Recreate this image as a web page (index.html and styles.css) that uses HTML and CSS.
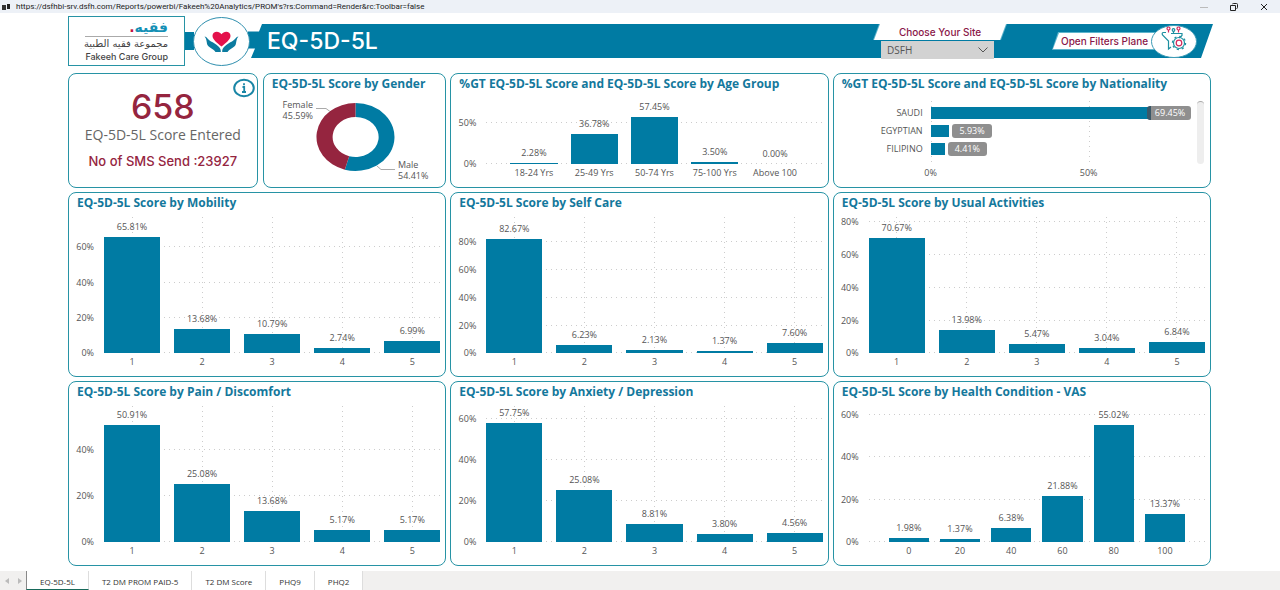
FILE: index.html
```html
<!DOCTYPE html>
<html lang="en">
<head>
<meta charset="utf-8">
<title>EQ-5D-5L</title>
<link rel="stylesheet" href="styles.css">
</head>
<body>
<div class="titlebar">
  <svg class="favicon" viewBox="0 0 9 8" aria-hidden="true"><path d="M0 2h4v5H0z" fill="#333"/><path d="M5 1h3v5H5z" fill="#222"/></svg>
  <span class="url">https://dsfhbi-srv.dsfh.com/Reports/powerbi/Fakeeh%20Analytics/PROM's?rs:Command=Render&amp;rc:Toolbar=false</span>
  <div class="window-buttons">
    <button type="button" aria-label="Minimize"><svg viewBox="0 0 8 8"><path d="M0 4.5h8" stroke="#bbb"/></svg></button>
    <button type="button" aria-label="Restore"><svg viewBox="0 0 8 8"><path d="M.5 2.5h5v5h-5zM2.500 1.200q0-.7.8-.7H6.500q1 0 1 1V4.500q0 1-1 1" fill="none" stroke="#222"/></svg></button>
    <button type="button" aria-label="Close"><svg viewBox="0 0 8 8"><path d="M1 1l6 6M7 1l-6 6" stroke="#222"/></svg></button>
  </div>
</div>

<header class="header">
  <div class="logo">
    <strong class="logo-mark" lang="ar" dir="rtl">فقيه<span>.</span></strong>
    <span class="logo-arabic" lang="ar" dir="rtl">مجموعة فقيه الطبية</span>
    <span class="logo-latin">Fakeeh Care Group</span>
  </div>
  <div class="link-bar"></div>
  <svg class="emblem" viewBox="0 0 57 49" aria-hidden="true">
    <ellipse cx="28.500" cy="24.500" rx="28" ry="24" fill="#fff" stroke="#2f8fae"/>
    <path d="M28.500 29.500C24 26 19.500 22.500 19.500 18.800C19.500 14 26 13.300 28.500 17.300C31 13.300 37.500 14 37.500 18.800C37.500 22.500 33 26 28.500 29.500Z" fill="#e4114b"/>
    <path d="M11.500 19.500C14 19.500 15 23 18 24.500C20 25.500 23 27 26 30C27.500 31.500 27.800 33 27.800 35H22.500C20 31.500 16 30.500 14.500 28C13.500 26 14 22 11.500 19.500Z" fill="#0b7b9f"/>
    <path d="M45.500 19.500C43 19.500 42 23 39 24.500C37 25.500 34 27 31 30C29.500 31.500 29.200 33 29.200 35H34.500C37 31.500 41 30.500 42.500 28C43.500 26 43 22 45.500 19.500Z" fill="#0b7b9f"/>
  </svg>
  <div class="banner">
    <h1>EQ-5D-5L</h1>
    <div class="site">
      <label class="site-label" for="site"><span>Choose Your Site</span></label>
      <div class="site-box">
        <select id="site"><option>DSFH</option></select>
        <svg viewBox="0 0 10 6" aria-hidden="true"><path d="M.5 .5L5 5L9.500 .5" fill="none" stroke="#555"/></svg>
      </div>
    </div>
    <button type="button" class="filters">
      <span class="filters-label"><span>Open Filters Plane</span></span>
      <svg viewBox="0 0 46 33" aria-hidden="true">
        <ellipse cx="23" cy="16.500" rx="22.500" ry="16" fill="#fff" stroke="#3c9bb5"/>
        <g fill="none" stroke="#1d8fa0" stroke-width="1.200">
          <path d="M15 7.500H12.500Q10.500 7.500 11.500 10L17.500 16V24L20 22M20 8.500H27M27 8.500H31V10.500L28 13"/>
          <circle cx="22.500" cy="5" r="1.300"/><path d="M22.500 6.500V9"/>
          <circle cx="28" cy="18" r="5.500"/><circle cx="28" cy="18" r="6.600" stroke-dasharray="2.200 3"/>
        </g>
        <g fill="none" stroke="#d4285c" stroke-width="1.200"><circle cx="17.500" cy="3.500" r="1.500"/><path d="M17.500 5V7.500"/><circle cx="27.500" cy="3.500" r="1.500"/><path d="M27.500 5V7.500"/><circle cx="28" cy="18" r="2.800"/></g>
      </svg>
    </button>
  </div>
</header>

<main class="dashboard">
  <div class="summary">
    <section class="card total">
      <button type="button" class="info" aria-label="Information"><svg viewBox="0 0 22 20"><ellipse cx="11" cy="10" rx="9.800" ry="8.200" fill="#fff" stroke="#1a86a6" stroke-width="2"/><path d="M11 5.200v2M9.500 9H11.200V14M9 14H13" fill="none" stroke="#1a86a6" stroke-width="1.800"/></svg></button>
      <strong class="total-value">658</strong>
      <span class="total-label">EQ-5D-5L Score Entered</span>
      <span class="total-sms">No of SMS Send :23927</span>
    </section>
    <section class="card">
      <h2>EQ-5D-5L Score by Gender</h2>
      <div class="donut">
        <p class="donut-start">Female<br>45.59%</p>
        <svg viewBox="0 0 79 74" aria-hidden="true">
          <path d="M39.500 3A39 34 0 1 1 28.800 69.700L33.200 56.200A23 20 0 1 0 39.500 17Z" fill="#007ba3"/>
          <path d="M28.800 69.700A39 34 0 0 1 39.500 3V17A23 20 0 0 0 33.200 56.200Z" fill="#95253f"/>
          <path d="M0 8.500H10L14 11.500M61 66L65 69.500H79" fill="none" stroke="#aaa"/>
        </svg>
        <p class="donut-end">Male<br>54.41%</p>
      </div>
    </section>
  </div>

  <section class="card">
    <h2>%GT EQ-5D-5L Score and EQ-5D-5L Score by Age Group</h2>
    <div class="chart age" style="--max:80;--step:50">
      <ol class="bands"><li>0%</li><li>50%</li></ol>
      <ul class="bars">
        <li style="--v:2.28"><span>2.28%</span><i></i></li><li style="--v:36.78"><span>36.78%</span><i></i></li><li style="--v:57.45"><span>57.45%</span><i></i></li><li style="--v:3.5"><span>3.50%</span><i></i></li><li style="--v:0"><span>0.00%</span><i></i></li>
      </ul>
      <ul class="names"><li>18-24 Yrs</li><li>25-49 Yrs</li><li>50-74 Yrs</li><li>75-100 Yrs</li><li>Above 100</li></ul>
    </div>
  </section>

  <section class="card">
    <h2>%GT EQ-5D-5L Score and EQ-5D-5L Score by Nationality</h2>
    <div class="nations">
      <div class="nation-scroll">
        <ul class="nation-rows" style="--max:84">
          <li style="--v:69.45"><b>SAUDI</b><div><i></i><span class="over">69.45%</span></div></li>
          <li style="--v:5.93"><b>EGYPTIAN</b><div><i></i><span>5.93%</span></div></li>
          <li style="--v:4.41"><b>FILIPINO</b><div><i></i><span>4.41%</span></div></li>
        </ul>
        <div class="track"></div>
      </div>
      <div class="nation-axis"><span>0%</span><span>50%</span></div>
    </div>
  </section>

  <section class="card">
    <h2>EQ-5D-5L Score by Mobility</h2>
    <div class="chart lines" style="--max:77;--step:20">
      <ol class="bands"><li>0%</li><li>20%</li><li>40%</li><li>60%</li></ol>
      <ul class="bars">
        <li style="--v:65.81"><span>65.81%</span><i></i></li><li style="--v:13.68"><span>13.68%</span><i></i></li><li style="--v:10.79"><span>10.79%</span><i></i></li><li style="--v:2.74"><span>2.74%</span><i></i></li><li style="--v:6.99"><span>6.99%</span><i></i></li>
      </ul>
      <ul class="names"><li>1</li><li>2</li><li>3</li><li>4</li><li>5</li></ul>
    </div>
  </section>

  <section class="card">
    <h2>EQ-5D-5L Score by Self Care</h2>
    <div class="chart lines" style="--max:98;--step:20">
      <ol class="bands"><li>0%</li><li>20%</li><li>40%</li><li>60%</li><li>80%</li></ol>
      <ul class="bars">
        <li style="--v:82.67"><span>82.67%</span><i></i></li><li style="--v:6.23"><span>6.23%</span><i></i></li><li style="--v:2.13"><span>2.13%</span><i></i></li><li style="--v:1.37"><span>1.37%</span><i></i></li><li style="--v:7.6"><span>7.60%</span><i></i></li>
      </ul>
      <ul class="names"><li>1</li><li>2</li><li>3</li><li>4</li><li>5</li></ul>
    </div>
  </section>

  <section class="card">
    <h2>EQ-5D-5L Score by Usual Activities</h2>
    <div class="chart lines" style="--max:83;--step:20">
      <ol class="bands"><li>0%</li><li>20%</li><li>40%</li><li>60%</li><li>80%</li></ol>
      <ul class="bars">
        <li style="--v:70.67"><span>70.67%</span><i></i></li><li style="--v:13.98"><span>13.98%</span><i></i></li><li style="--v:5.47"><span>5.47%</span><i></i></li><li style="--v:3.04"><span>3.04%</span><i></i></li><li style="--v:6.84"><span>6.84%</span><i></i></li>
      </ul>
      <ul class="names"><li>1</li><li>2</li><li>3</li><li>4</li><li>5</li></ul>
    </div>
  </section>

  <section class="card">
    <h2>EQ-5D-5L Score by Pain / Discomfort</h2>
    <div class="chart lines" style="--max:59;--step:20">
      <ol class="bands"><li>0%</li><li>20%</li><li>40%</li></ol>
      <ul class="bars">
        <li style="--v:50.91"><span>50.91%</span><i></i></li><li style="--v:25.08"><span>25.08%</span><i></i></li><li style="--v:13.68"><span>13.68%</span><i></i></li><li style="--v:5.17"><span>5.17%</span><i></i></li><li style="--v:5.17"><span>5.17%</span><i></i></li>
      </ul>
      <ul class="names"><li>1</li><li>2</li><li>3</li><li>4</li><li>5</li></ul>
    </div>
  </section>

  <section class="card">
    <h2>EQ-5D-5L Score by Anxiety / Depression</h2>
    <div class="chart lines" style="--max:66;--step:20">
      <ol class="bands"><li>0%</li><li>20%</li><li>40%</li><li>60%</li></ol>
      <ul class="bars">
        <li style="--v:57.75"><span>57.75%</span><i></i></li><li style="--v:25.08"><span>25.08%</span><i></i></li><li style="--v:8.81"><span>8.81%</span><i></i></li><li style="--v:3.8"><span>3.80%</span><i></i></li><li style="--v:4.56"><span>4.56%</span><i></i></li>
      </ul>
      <ul class="names"><li>1</li><li>2</li><li>3</li><li>4</li><li>5</li></ul>
    </div>
  </section>

  <section class="card">
    <h2>EQ-5D-5L Score by Health Condition - VAS</h2>
    <div class="chart vas" style="--max:64;--step:20">
      <ol class="bands"><li>0%</li><li>20%</li><li>40%</li><li>60%</li></ol>
      <ul class="bars">
        <li style="--v:1.98"><span>1.98%</span><i></i></li><li style="--v:1.37"><span>1.37%</span><i></i></li><li style="--v:6.38"><span>6.38%</span><i></i></li><li style="--v:21.88"><span>21.88%</span><i></i></li><li style="--v:55.02"><span>55.02%</span><i></i></li><li style="--v:13.37"><span>13.37%</span><i></i></li>
      </ul>
      <ul class="names"><li>0</li><li>20</li><li>40</li><li>60</li><li>80</li><li>100</li></ul>
    </div>
  </section>
</main>

<nav class="tabs" aria-label="Report pages">
  <button type="button" class="arrow" aria-label="Previous page"><svg viewBox="0 0 4 6"><path d="M4 0v6L0 3z" fill="#bbb"/></svg></button>
  <button type="button" class="arrow" aria-label="Next page"><svg viewBox="0 0 4 6"><path d="M0 0v6l4-3z" fill="#bbb"/></svg></button>
  <a href="#eq" class="active">EQ-5D-5L</a>
  <a href="#paid">T2 DM PROM PAID-5</a>
  <a href="#score">T2 DM Score</a>
  <a href="#phq9">PHQ9</a>
  <a href="#phq2">PHQ2</a>
</nav>
</body>
</html>
```
FILE: styles.css
```css
:root {
  --teal: #007ba3;
  --wine: #95253f;
  --line: #2793a5;
  --text: #555;
}
* { box-sizing: border-box; }
body {
  margin: 0;
  min-height: 100vh;
  display: flex;
  flex-direction: column;
  background: #fff;
  color: var(--text);
  font: 9px/12px "Open Sans", "Noto Sans", sans-serif;
}
h1, h2, p, ul, ol { margin: 0; padding: 0; list-style: none; }
button, select { font: inherit; color: inherit; border: 0; padding: 0; background: none; }
svg { display: block; }

.titlebar {
  display: flex;
  align-items: center;
  gap: 5px;
  height: 13px;
  padding: 0 12px 0 2px;
  background: #edf1f7;
  color: #222;
}
.favicon { width: 9px; height: 8px; }
.url { font-family: Roboto, sans-serif; font-size: 8px; }
.window-buttons { display: flex; gap: 22px; margin-left: auto; }
.window-buttons svg { width: 8px; height: 8px; }

.header {
  display: flex;
  align-items: center;
  padding: 3px 67px 7px 68px;
}
.logo {
  display: flex;
  flex-direction: column;
  align-items: flex-end;
  width: 117px;
  height: 50px;
  padding: 2px 16px 0;
  border: 1px solid var(--line);
  font-size: 9px;
  color: #444;
}
.logo-mark {
  width: 100%;
  height: 18px;
  border-bottom: 1px solid #aaa;
  color: #1590b5;
  font: bold 14px/16px "DejaVu Sans", sans-serif;
}
.logo-mark span { color: #c3133f; }
.logo-arabic { font: 10px/14px "DejaVu Sans", sans-serif; white-space: nowrap; }
.logo-latin { font: 500 9px/11px Inter, sans-serif; white-space: nowrap; }
.link-bar { width: 9px; height: 18px; background: var(--teal); }
.emblem { width: 57px; height: 49px; flex: none; margin-left: -1px; position: relative; z-index: 1; }
.banner {
  position: relative;
  flex: 1;
  display: flex;
  align-items: center;
  height: 34px;
  margin-left: -2px;
  padding: 0 16px 0 19px;
}
.banner::before {
  content: "";
  position: absolute;
  inset: 0;
  background: var(--teal);
  clip-path: polygon(14px 0, 100% 0, calc(100% - 12px) 100%, 3px 100%, 7px 72%, 0 72%, 0 22%, 11px 22%);
}
.banner > * { position: relative; }
.banner h1 { color: #fff; font: 500 23px/34px Inter, sans-serif; }
.site { width: 134px; margin-left: auto; margin-right: 45px; text-align: center; }
.site-label, .filters-label {
  display: block;
  background: #5db4cc;
  color: #8a1648;
  font: 500 10px/18px Inter, sans-serif;
}
.site-label { clip-path: polygon(6px 0, 100% 0, calc(100% - 6px) 100%, 0 100%); }
.site-label span, .filters-label span { display: block; margin: 1px; background: #fff; line-height: 16px; }
.site-label span { clip-path: polygon(6px 0, 100% 0, calc(100% - 6px) 100%, 0 100%); }
.site-box { display: flex; align-items: center; width: 113px; height: 18px; margin-left: 8px; padding-right: 6px; background: #d2d2d2; }
.site-box select { flex: 1; appearance: none; padding-left: 6px; font-size: 10px; line-height: 16px; }
.site-box svg { width: 10px; height: 6px; }
.filters { display: flex; align-items: center; }
.filters-label { width: 112px; margin-right: -13px; clip-path: polygon(6px 0, 100% 0, 100% 100%, 0 100%); text-align: left; }
.filters-label span { padding-left: 8px; clip-path: polygon(6px 0, 100% 0, 100% 100%, 0 100%); }
.filters svg { width: 46px; height: 33px; position: relative; }

.dashboard {
  flex: 1;
  display: grid;
  grid-template-columns: repeat(3, 1fr);
  grid-template-rows: 115fr 184fr 184fr;
  gap: 4px;
  padding: 0 69px 5px 68px;
}
.card {
  display: flex;
  flex-direction: column;
  min-width: 0;
  border: 1px solid var(--line);
  border-radius: 8px;
  background: #fff;
}
.card h2 {
  padding: 2px 8px 0;
  color: #14789c;
  font: bold 12px/15px "Open Sans", "Noto Sans", sans-serif;
  white-space: nowrap;
}
.summary { display: grid; grid-template-columns: 190fr 184fr; gap: 5px; }

.total { position: relative; align-items: center; justify-content: center; color: var(--wine); }
.total-value { font: 500 34px/36px Inter, sans-serif; }
.total-label { color: #666; font-size: 14px; line-height: 20px; }
.total-sms { margin-top: 6px; padding-bottom: 2px; font: 500 13px/20px Inter, sans-serif; }
.info { position: absolute; top: 4px; right: 2px; }
.info svg { width: 22px; height: 20px; }

.donut { flex: 1; display: flex; justify-content: center; gap: 3px; padding: 9px 0 0 2px; line-height: 11px; }
.donut svg { width: 79px; height: 74px; flex: none; }
.donut-start { margin-top: -1px; }
.donut-end { align-self: flex-end; padding-bottom: 6px; }

.chart {
  flex: 1;
  display: grid;
  grid-template-columns: 35px 1fr;
  grid-template-rows: 1fr 23px;
  padding: 7px 5px 0 0;
}
.bands { grid-area: 1 / 1 / 2 / 3; display: flex; flex-direction: column-reverse; }
.bands li {
  flex: 0 0 calc(var(--step) / var(--max) * 100%);
  display: grid;
  grid-template-columns: 25px 1fr;
  gap: 10px;
  align-items: end;
  text-align: right;
  line-height: 12px;
  margin-bottom: -6px;
  margin-top: 6px;
}
.bands li::after {
  content: "";
  height: 1px;
  margin-bottom: 6px;
  background: repeating-linear-gradient(to right, #ccc 0 1px, transparent 1px 5px);
}
.bars, .names { display: grid; grid-auto-flow: column; grid-auto-columns: minmax(0, 1fr); gap: 14px; text-align: center; }
.bars { grid-area: 1 / 2; }
.names { grid-area: 2 / 2; padding-top: 3px; white-space: nowrap; }
.bars li, .names li { display: flex; flex-direction: column; align-items: center; }
.bars li { justify-content: flex-end; }
.lines .bars li { background: repeating-linear-gradient(to bottom, #ccc 0 1px, transparent 1px 5px) center / 1px 100% no-repeat; }
.bars span { padding-bottom: 4px; }
.bars i { width: 100%; flex: 0 0 calc(var(--v) / var(--max) * 100%); background: var(--teal); }
.age .bars, .age .names { gap: 13px; padding: 0 24px; }
.age .names, .vas .names { padding-top: 3px; }
.vas .bars, .vas .names { gap: 11px; padding-left: 20px; padding-right: 20px; }

.nations { flex: 1; display: flex; flex-direction: column; padding: 10px 6px 0 0; }
.nation-scroll { flex: 1; display: flex; }
.nation-rows {
  flex: 1;
  padding-top: 3px;
  background:
    repeating-linear-gradient(to bottom, #ccc 0 1px, transparent 1px 5px) 97px 0 / 1px 100% no-repeat,
    repeating-linear-gradient(to bottom, #ccc 0 1px, transparent 1px 5px) 255px 0 / 1px 100% no-repeat;
}
.nation-rows li { display: flex; align-items: center; height: 18px; }
.nation-rows b { width: 97px; padding-right: 8px; text-align: right; font-weight: 400; }
.nation-rows div { flex: 1; display: flex; align-items: center; }
.nation-rows i { width: calc(var(--v) / var(--max) * 100%); height: 12px; background: var(--teal); }
.nation-rows span { margin-left: 3px; padding: 0 7px; border-radius: 3px; background: #8f8f8f; color: #fff; line-height: 14px; }
.nation-rows .over { margin-left: -4px; padding: 0 6px 0 4px; border-left: 4px solid #3b5868; }
.track { width: 7px; border-radius: 4px; background: #eee; border-top: 1px solid #aaa; }
.nation-axis { display: grid; grid-template-columns: 158px 158px; padding: 3px 0 8px 18px; text-align: center; }

.tabs { display: flex; height: 19px; background: #f1f0ef; color: #333; font-size: 8px; line-height: 19px; }
.arrow { width: 13px; display: grid; place-items: center; }
.arrow svg { width: 4px; height: 6px; }
.tabs a { padding: 2px 13px 0; border-right: 1px solid #ddd; background: #fff; color: inherit; line-height: 17px; text-decoration: none; }
.tabs .active { border-bottom: 1px solid #17695a; border-left: 1px solid #888; }
```
